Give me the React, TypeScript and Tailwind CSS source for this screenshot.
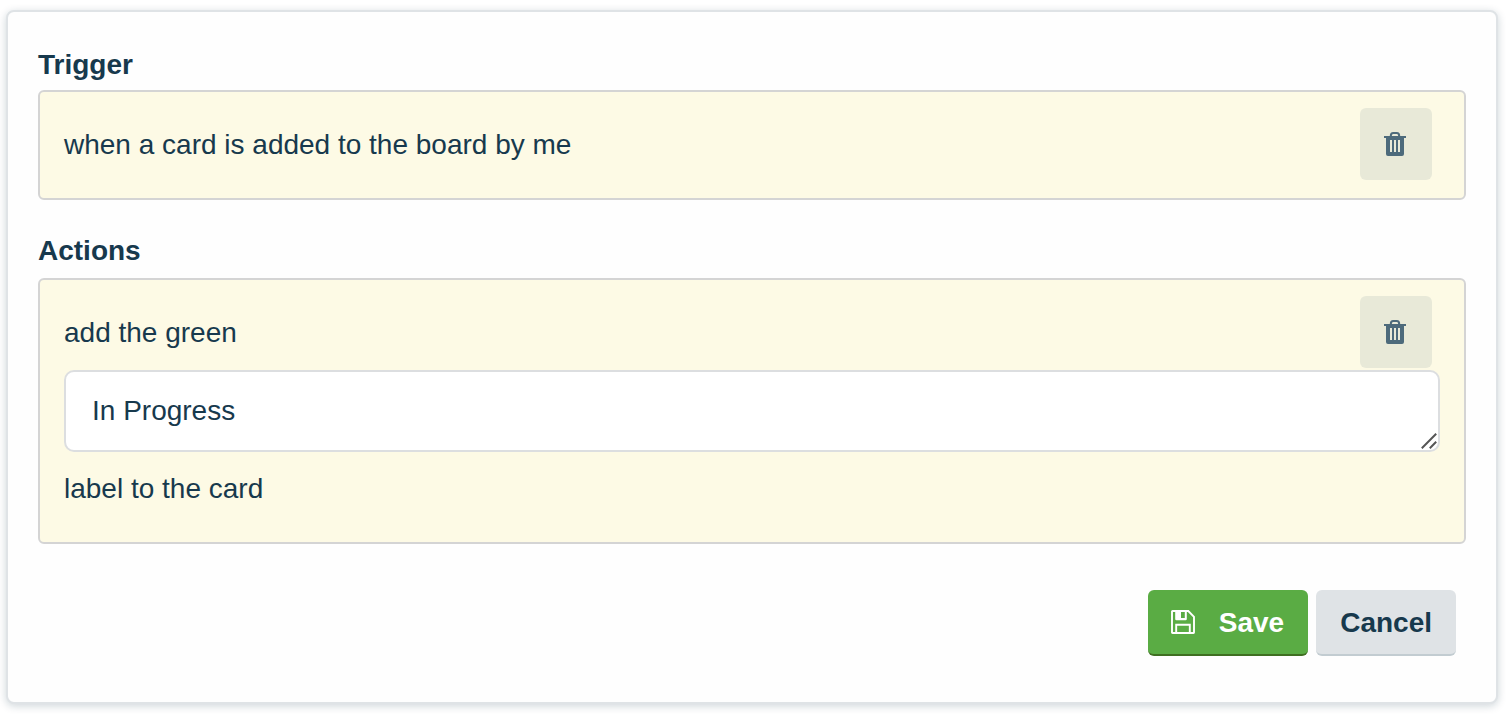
import { useState } from "react";
import type { ReactNode } from "react";

function TrashIcon() {
  return (
    <svg className="size-6" viewBox="0 0 24 24" fill="none" aria-hidden="true">
      <path
        fill="currentColor"
        fillRule="evenodd"
        d="M0 4h22v2h-2v16a2 2 0 0 1-2 2H4a2 2 0 0 1-2-2V6H0zM6 8v12h2V8zM10 8v12h2V8zM14 8v12h2V8z"
      />
      <path d="M6.800 4.500V4c0-1.900.8-2.900 2.400-2.900h3.600c1.600 0 2.400 1 2.400 2.900v.5" stroke="currentColor" strokeWidth="2" />
    </svg>
  );
}

function SaveIcon() {
  return (
    <svg className="size-6" viewBox="0 0 24 24" fill="none" aria-hidden="true">
      <path
        d="M1.500 1H17.300L23 6.800V22.500a.5.500 0 0 1-.5.500h-21a.5.500 0 0 1-.5-.5v-21A.5.500 0 0 1 1.500 1z"
        stroke="currentColor"
        strokeWidth="1.900"
      />
      <path fill="currentColor" fillRule="evenodd" d="M4.200 0h11.600v9a1.200 1.200 0 0 1-1.200 1.200H5.400A1.200 1.200 0 0 1 4.200 9zM10 2v6h3.800V2z" />
      <path d="M5.200 23v-8.200h13.600V23" stroke="currentColor" strokeWidth="1.900" />
    </svg>
  );
}

function Rule({ text, children }: { text: string; children?: ReactNode }) {
  return (
    <div className="rounded-md border-2 border-[#d4d4d4] bg-[#fdfae5] px-6 pt-4 pb-[18px]">
      <div className="flex items-center justify-between pr-2">
        <p className="pt-0.5">{text}</p>
        <button
          type="button"
          aria-label="Delete"
          className="flex size-[72px] shrink-0 items-center justify-center rounded-md bg-[#e8e9d8] text-[#4d6a7b]"
        >
          <TrashIcon />
        </button>
      </div>
      {children}
    </div>
  );
}

export default function App() {
  const [label, setLabel] = useState("In Progress");

  return (
    <main className="bg-white pt-2.5 pr-2 pb-2.5 pl-1.5 font-['Liberation_Sans',Arial,sans-serif] text-[28px] leading-[42px] text-[#17394d]">
      <form
        className="rounded-lg border-2 border-[#dfe3e6] bg-[#fefefe] px-[30px] pt-8 pb-[46px] shadow-[0_2px_8px_rgba(9,45,66,0.2)]"
        onSubmit={(e) => e.preventDefault()}
      >
        <section>
          <h2 className="mb-1 font-bold">Trigger</h2>
          <Rule text="when a card is added to the board by me" />
        </section>

        <section className="mt-[30px]">
          <h2 className="mb-1.5 font-bold">Actions</h2>
          <Rule text="add the green">
            <div className="relative mt-0.5">
              <textarea
                aria-label="Label name"
                rows={1}
                value={label}
                onChange={(e) => setLabel(e.target.value)}
                className="block h-[82px] w-full resize-none overflow-hidden rounded-[10px] border-2 border-[#dcdee0] bg-white px-[26px] py-[18px] outline-none"
              />
              <svg
                className="pointer-events-none absolute right-[3px] bottom-[3px] size-4"
                viewBox="0 0 16 16"
                fill="none"
                stroke="#555555"
                strokeWidth="2"
                aria-hidden="true"
              >
                <path d="M.8 15.200 15.200.8M8.800 15.200l6.400-6.400" />
              </svg>
            </div>
            <p className="mt-4 mb-3.5">label to the card</p>
          </Rule>
        </section>

        <div className="mt-[46px] mr-2.5 flex justify-end gap-2 font-bold">
          <button
            type="submit"
            className="flex h-[66px] items-center gap-6 rounded-md border-b-2 border-[#3f6f21] bg-[#5aac44] pr-6 pl-[23px] text-white"
          >
            <SaveIcon />
            <span className="pt-0.5">Save</span>
          </button>
          <button
            type="button"
            className="flex h-[66px] items-center rounded-md border-b-2 border-[#c2ccd1] bg-[#dfe3e6] px-6"
          >
            <span className="pt-0.5">Cancel</span>
          </button>
        </div>
      </form>
    </main>
  );
}
